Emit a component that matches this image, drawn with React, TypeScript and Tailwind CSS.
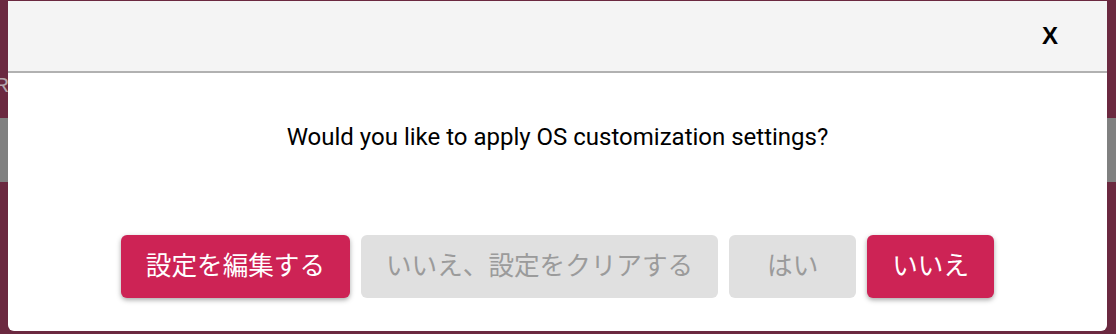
import React from "react"

const jp = "font-['Roboto','Noto_Sans_CJK_JP',sans-serif]"

export default function App() {
  const buttons = [
    { label: "設定を編集する", primary: true },
    { label: "いいえ、設定をクリアする", primary: false },
    { label: "はい", primary: false },
    { label: "いいえ", primary: true },
  ]

  return (
    <div className="relative h-[334px] w-[1116px] overflow-hidden bg-[#6b2940]">
      {/* page behind the overlay */}
      <div className="-ml-[6px] pt-[74px] text-[21px] leading-[22px] text-[#b4a6ab] font-['Liberation_Sans',sans-serif]">
        R
      </div>
      <div className="mt-[22px] h-[64px] w-full bg-[#808080]" />

      {/* dialog */}
      <div className="absolute left-[8px] top-[1px] flex h-[330px] w-[1099px] flex-col overflow-hidden rounded-b-[6px] bg-white">
        <div className="flex h-[72px] shrink-0 items-center justify-end border-b-2 border-[#b1b1b1] bg-[#f4f4f4] pr-[49px]">
          <span className="font-['Liberation_Sans',sans-serif] text-[24px] font-bold leading-none text-black">X</span>
        </div>

        <div className="flex flex-1 flex-col items-center">
          <p className={`mt-[50px] text-[24px] leading-[28px] text-black ${jp}`}>
            Would you like to apply OS customization settings?
          </p>
          <div className="mt-[84px] flex gap-[11px]">
            {buttons.map((b) => (
              <button
                key={b.label}
                className={[
                  "h-[63px] min-w-[127px] rounded-[6px] px-[25px] text-[25.6px] leading-none",
                  jp,
                  b.primary
                    ? "bg-[#cd2355] text-white shadow-[0_2px_5px_rgba(0,0,0,0.35)]"
                    : "bg-[#e0e0e0] text-[#9b9b9b]",
                ].join(" ")}
              >
                {b.label}
              </button>
            ))}
          </div>
        </div>
      </div>
    </div>
  )
}
